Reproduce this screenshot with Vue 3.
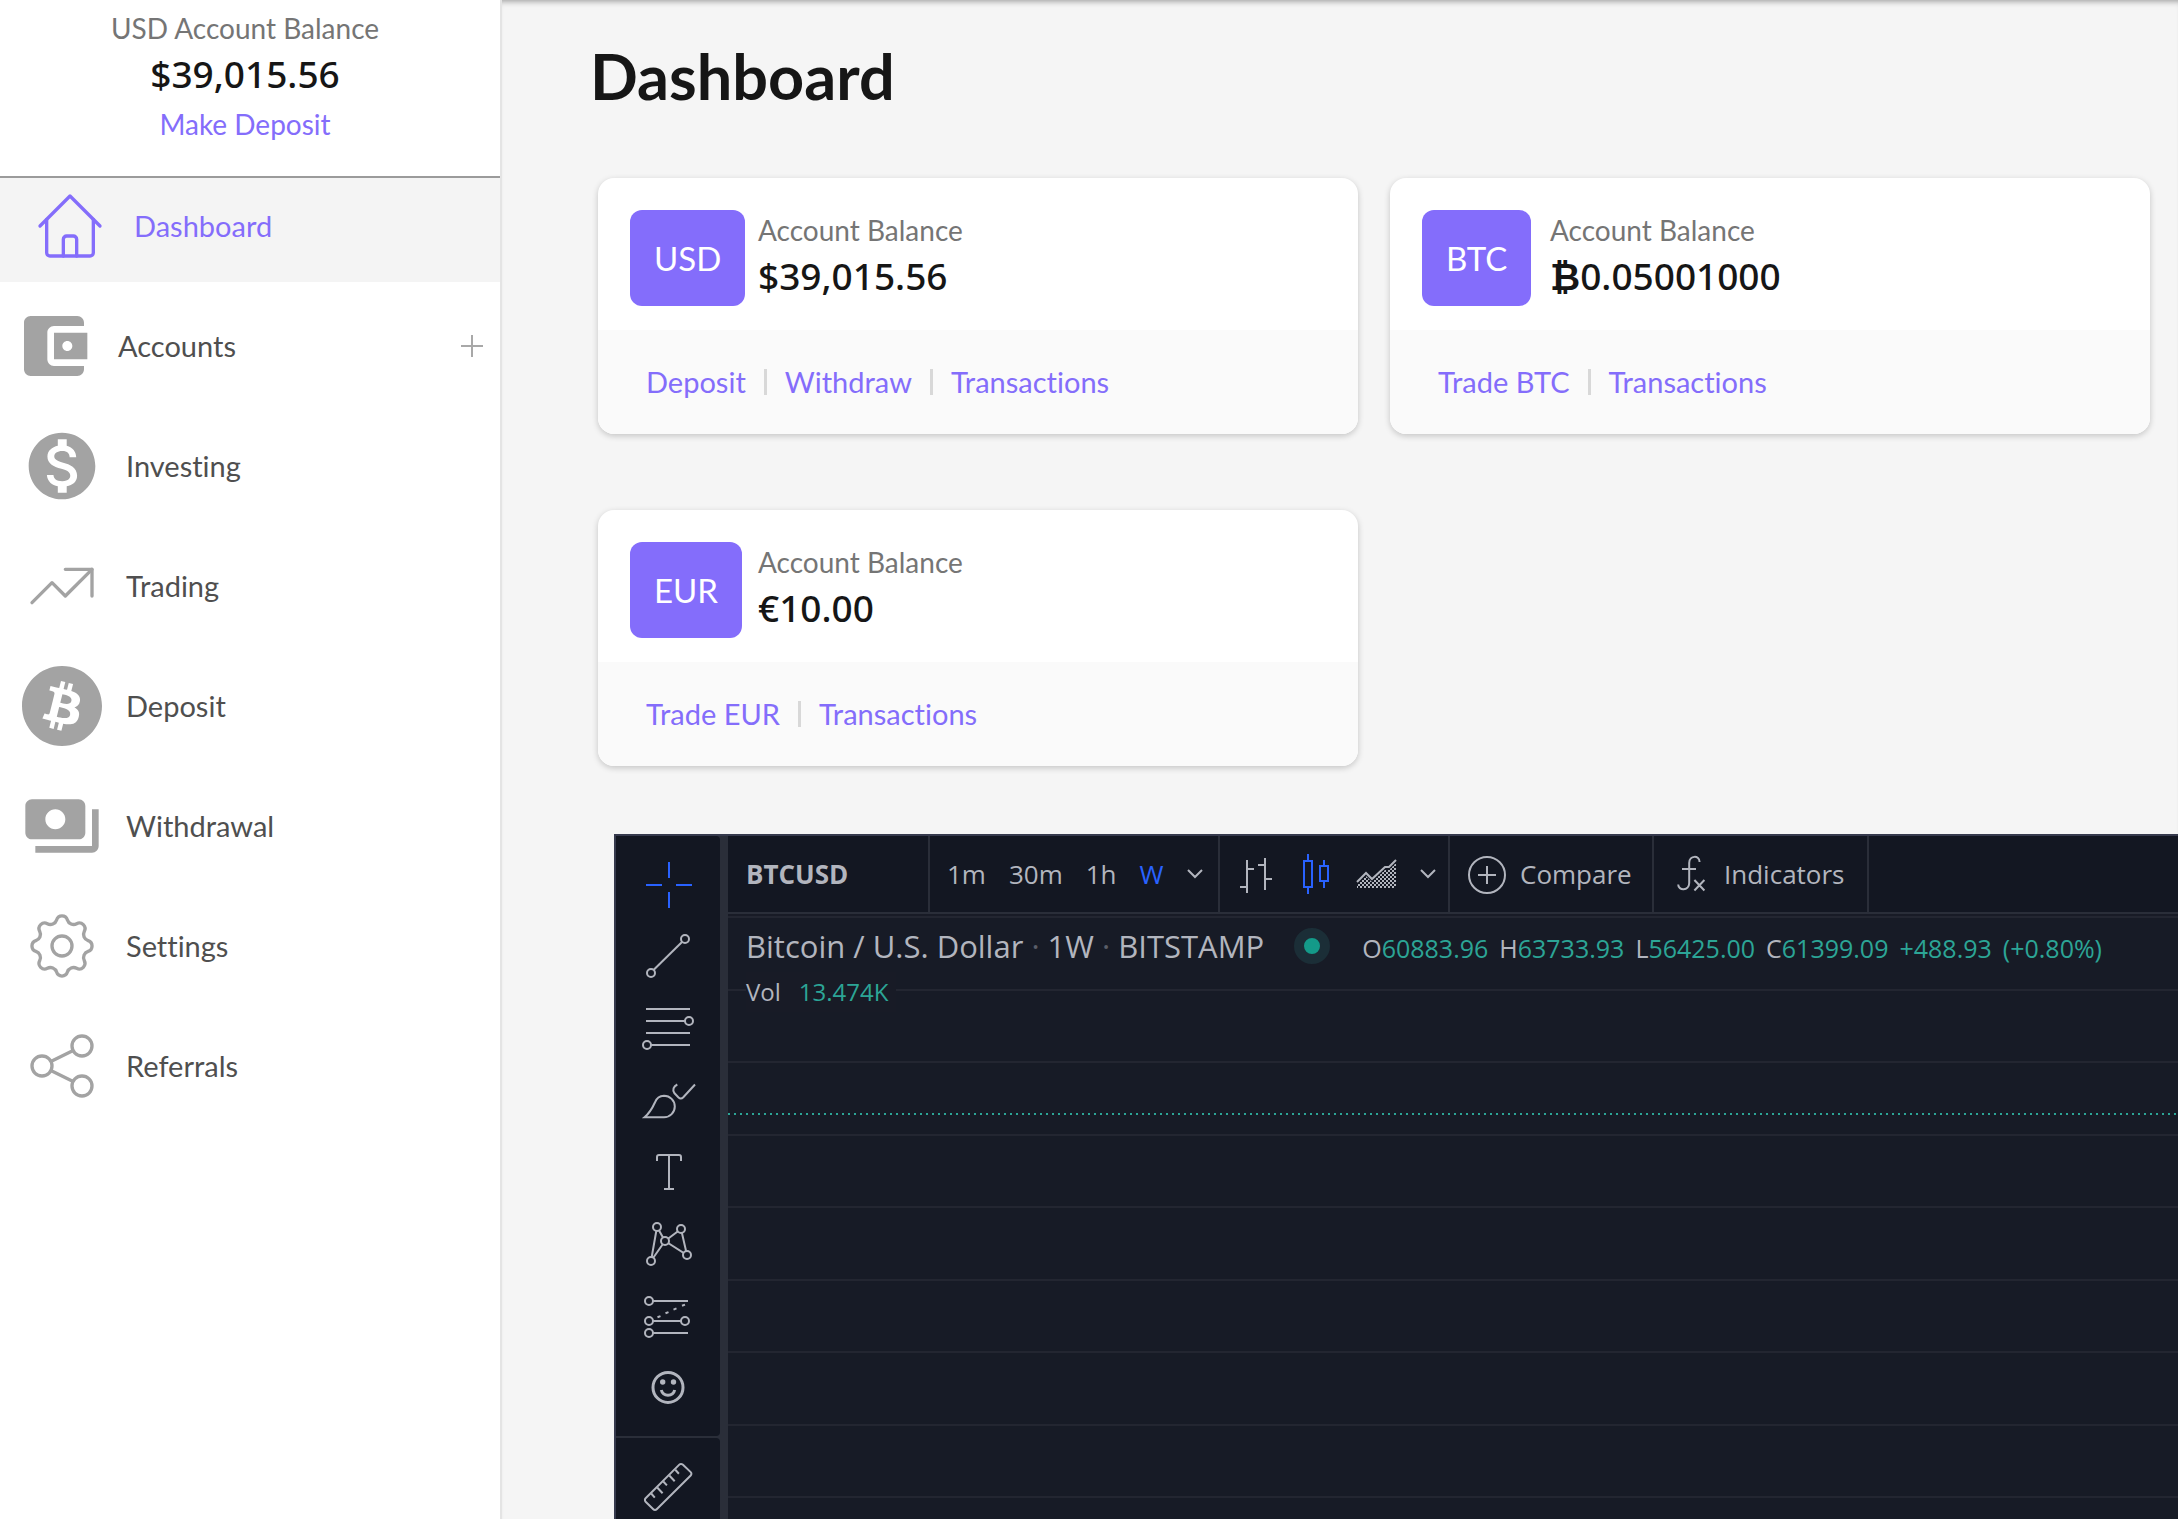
<script setup>
const navItems = [
  { label: 'Dashboard', icon: 'home', active: true },
  { label: 'Accounts', icon: 'wallet', expandable: true },
  { label: 'Investing', icon: 'dollar' },
  { label: 'Trading', icon: 'trend' },
  { label: 'Deposit', icon: 'bitcoin' },
  { label: 'Withdrawal', icon: 'cash' },
  { label: 'Settings', icon: 'gear' },
  { label: 'Referrals', icon: 'share' },
]

const accounts = [
  { code: 'USD', balance: '$39,015.56', links: ['Deposit', 'Withdraw', 'Transactions'] },
  { code: 'BTC', coin: '₿', balance: '0.05001000', links: ['Trade BTC', 'Transactions'] },
  { code: 'EUR', balance: '€10.00', links: ['Trade EUR', 'Transactions'] },
]

const intervals = ['1m', '30m', '1h', 'W']
const activeInterval = 'W'

const ohlc = [
  { key: 'O', value: '60883.96' },
  { key: 'H', value: '63733.93' },
  { key: 'L', value: '56425.00' },
  { key: 'C', value: '61399.09' },
]

// Outline of the settings gear: eight lobes joined by concave arcs.
const point = (deg) => {
  const a = (deg * Math.PI) / 180
  return `${(12 + 8 * Math.cos(a)).toFixed(2)} ${(12 + 8 * Math.sin(a)).toFixed(2)}`
}
let gearPath = `M${point(-11.7)}`
for (let k = 0; k < 8; k++) {
  gearPath += `A1.7 1.7 0 0 1 ${point(45 * k + 11.7)}A1.95 1.95 0 0 0 ${point(45 * (k + 1) - 11.7)}`
}
gearPath += 'Z'
</script>

<template>
  <div class="page">
    <aside class="sidebar">
      <section class="summary">
        <p class="label">USD Account Balance</p>
        <p class="amount">$39,015.56</p>
        <a class="link" href="#">Make Deposit</a>
      </section>
      <nav class="nav" aria-label="Main">
        <a
          v-for="item in navItems"
          :key="item.label"
          href="#"
          class="nav-item"
          :class="{ 'is-active': item.active, 'is-expandable': item.expandable }"
        >
          <svg v-if="item.icon === 'bitcoin'" class="nav-icon solid" viewBox="0 0 32 32" aria-hidden="true">
            <path d="M16 32C7.163 32 0 24.837 0 16S7.163 0 16 0s16 7.163 16 16-7.163 16-16 16zm7.189-17.98c.314-2.096-1.283-3.223-3.465-3.975l.708-2.84-1.728-.43-.69 2.765c-.454-.114-.92-.22-1.385-.326l.695-2.783L15.596 6l-.708 2.839c-.376-.086-.746-.17-1.104-.26l.002-.009-2.384-.595-.46 1.846s1.283.294 1.256.312c.7.175.826.638.805 1.006l-.806 3.235c.048.012.11.03.18.057l-.183-.045-1.13 4.532c-.086.212-.303.531-.793.41.018.025-1.256-.313-1.256-.313l-.858 1.978 2.25.561c.418.105.828.215 1.231.318l-.715 2.872 1.727.43.708-2.84c.472.127.93.245 1.378.357l-.706 2.828 1.728.43.715-2.866c2.948.558 5.164.333 6.097-2.333.752-2.146-.037-3.385-1.588-4.192 1.13-.26 1.98-1.003 2.207-2.538zm-3.95 5.538c-.533 2.147-4.148.986-5.32.695l.95-3.805c1.172.293 4.929.872 4.37 3.11zm.535-5.569c-.487 1.953-3.495.96-4.47.717l.86-3.45c.975.243 4.118.696 3.61 2.733z" />
          </svg>
          <svg v-else-if="item.icon === 'wallet'" class="nav-icon solid" viewBox="0 0 24 24" aria-hidden="true">
            <path d="M21 18v1c0 1.1-.9 2-2 2H5c-1.11 0-2-.9-2-2V5c0-1.1.89-2 2-2h14c1.1 0 2 .9 2 2v1h-9c-1.11 0-2 .9-2 2v8c0 1.1.89 2 2 2h9zm-9-2h10V8H12v8zm4-2.5c-.83 0-1.5-.67-1.5-1.5s.67-1.5 1.5-1.5 1.5.67 1.5 1.5-.67 1.5-1.5 1.5z" />
          </svg>
          <svg v-else-if="item.icon === 'dollar'" class="nav-icon solid" viewBox="0 0 24 24" aria-hidden="true">
            <path d="M12 2C6.48 2 2 6.48 2 12s4.48 10 10 10 10-4.48 10-10S17.52 2 12 2zm1.41 16.09V20h-2.67v-1.93c-1.71-.36-3.16-1.46-3.27-3.4h1.96c.1 1.05.82 1.87 2.65 1.87 1.96 0 2.4-.98 2.4-1.59 0-.83-.44-1.61-2.67-2.14-2.48-.6-4.18-1.62-4.18-3.67 0-1.72 1.39-2.84 3.11-3.21V4h2.67v1.95c1.86.45 2.79 1.86 2.85 3.39H14.3c-.05-1.11-.64-1.87-2.22-1.87-1.5 0-2.4.68-2.4 1.64 0 .84.65 1.39 2.67 1.91s4.18 1.39 4.18 3.91c-.02 1.83-1.38 2.83-3.12 3.16z" />
          </svg>
          <svg v-else-if="item.icon === 'cash'" class="nav-icon solid" viewBox="0 0 24 24" aria-hidden="true">
            <path d="M19 14V6c0-1.1-.9-2-2-2H3c-1.1 0-2 .9-2 2v8c0 1.1.9 2 2 2h14c1.1 0 2-.9 2-2zm-9-1c-1.66 0-3-1.34-3-3s1.34-3 3-3 3 1.34 3 3-1.34 3-3 3zm13-6v11c0 1.1-.9 2-2 2H4v-2h17V7h2z" />
          </svg>
          <svg v-else class="nav-icon line" viewBox="0 0 24 24" aria-hidden="true">
            <template v-if="item.icon === 'home'">
              <path d="M3 12l9-9 9 9" />
              <path d="M5 10v10a1 1 0 0 0 1 1h12a1 1 0 0 0 1-1V10" />
              <path d="M10 21v-5a1 1 0 0 1 1-1h2a1 1 0 0 1 1 1v5" />
            </template>
            <template v-else-if="item.icon === 'trend'">
              <path d="M3 17l6-6 4 4 8-8" />
              <path d="M13 7h8v8" />
            </template>
            <template v-else-if="item.icon === 'gear'">
              <path :d="gearPath" />
              <circle cx="12" cy="12" r="3" />
            </template>
            <template v-else>
              <circle cx="6" cy="12" r="3" />
              <circle cx="18" cy="6" r="3" />
              <circle cx="18" cy="18" r="3" />
              <path d="M8.8 10.6l6.4-3.2M8.8 13.4l6.4 3.2" />
            </template>
          </svg>
          <span class="nav-label">{{ item.label }}</span>
          <svg v-if="item.expandable" class="plus" viewBox="0 0 22 22" aria-hidden="true">
            <path d="M11 0v22M0 11h22" />
          </svg>
        </a>
      </nav>
    </aside>

    <main class="main">
      <h1 class="title">Dashboard</h1>

      <section class="cards">
        <article v-for="account in accounts" :key="account.code" class="card">
          <div class="card-top">
            <div><span class="badge">{{ account.code }}</span></div>
            <div>
              <p class="label">Account Balance</p>
              <p class="amount"><b v-if="account.coin">{{ account.coin }}</b>{{ account.balance }}</p>
            </div>
          </div>
          <footer class="card-links">
            <a v-for="link in account.links" :key="link" class="link" href="#">{{ link }}</a>
          </footer>
        </article>
      </section>

      <section class="chart">
        <div class="tools">
          <div class="tool-group">
            <button class="tool" aria-label="Crosshair">
              <svg class="blue" viewBox="0 0 56 56"><path d="M29 5v16M29 35v16M6 28h16M36 28h16" /></svg>
            </button>
            <button class="tool" aria-label="Trend line">
              <svg viewBox="0 0 56 56"><path d="M13.5 41L42 13" /><circle cx="11" cy="44" r="4" /><circle cx="45" cy="10" r="4" /></svg>
            </button>
            <button class="tool" aria-label="Fibonacci retracement">
              <svg viewBox="0 0 56 56"><path d="M6 8h44M6 20h39M6 32h44M11 44h39" /><circle cx="49" cy="20" r="4" /><circle cx="7" cy="44" r="4" /></svg>
            </button>
            <button class="tool" aria-label="Brush">
              <svg viewBox="0 0 56 56"><path d="M4.500 44.300c6-5 8-9.500 10.500-15a10 10 0 0 1 9-6.600a10.800 10.800 0 0 1 0 21.600z" /><path d="M37.300 11.500c-4 2-5 5.500-3 8.500l4 4.200c1.500 1.500 3.500 1.500 5 0L55 11.500" /></svg>
            </button>
            <button class="tool" aria-label="Text">
              <svg viewBox="0 0 56 56"><path d="M17 16v-4a2 2 0 0 1 2-2h20a2 2 0 0 1 2 2v4M29 10v34M24 44h10" /></svg>
            </button>
            <button class="tool" aria-label="Pattern">
              <svg viewBox="0 0 56 56">
                <path d="M17 10l-6 34L25 24zM25 24L41 12l6 26z" />
                <circle cx="17" cy="10" r="4" /><circle cx="41" cy="12" r="4" /><circle cx="25" cy="24" r="4" /><circle cx="11" cy="44" r="4" /><circle cx="47" cy="38" r="4" />
              </svg>
            </button>
            <button class="tool" aria-label="Forecast">
              <svg viewBox="0 0 56 56">
                <path d="M13 12h35M13 32h28M13 44h35" />
                <path d="M17.500 28.300l3-1.200M25.500 24.300l3-1.200M33.500 20.600l3-1.200M42 16.800l3-1.200" />
                <circle cx="9" cy="12" r="4" /><circle cx="9" cy="32" r="4" /><circle cx="45" cy="32" r="4" /><circle cx="9" cy="44" r="4" />
              </svg>
            </button>
            <button class="tool" aria-label="Emoji">
              <svg viewBox="0 0 56 56">
                <circle class="thick" cx="28" cy="26.400" r="15" /><path class="thick" d="M21.300 29a6.900 6.900 0 0 0 13.400 0" />
                <circle class="dot" cx="22.700" cy="21" r="2.700" /><circle class="dot" cx="33.500" cy="21" r="2.700" />
              </svg>
            </button>
          </div>
          <div class="tool-group">
            <button class="tool" aria-label="Measure">
              <svg viewBox="0 0 56 56">
                <path d="M5.600 39.300L39.300 5.600a2.400 2.400 0 0 1 3.400 0l8 7.500a2.400 2.400 0 0 1 0 3.400L16.700 50.300a2.400 2.400 0 0 1-3.400 0L5.600 42.700a2.400 2.400 0 0 1 0-3.400z" />
                <path d="M35.300 10.800l3.600 3.900M29.300 16.500l5.400 5.800M23.300 22.500l3.600 3.900M17.200 28.500l5.400 5.800M11.200 34.500l3.600 4.200" />
              </svg>
            </button>
          </div>
        </div>

        <div class="pane">
          <div class="bar">
            <div class="cell cell-symbol"><button class="symbol">BTCUSD</button></div>
            <div class="cell cell-intervals">
              <button v-for="interval in intervals" :key="interval" :class="{ selected: interval === activeInterval }">{{ interval }}</button>
              <button aria-label="More intervals"><svg class="chevron" viewBox="0 0 16 10"><path d="M1 1l7 7 7-7" /></svg></button>
            </div>
            <div class="cell cell-styles">
              <button aria-label="Bars">
                <svg class="style-icon" viewBox="0 0 56 56"><path d="M19 14v33M19 23h7M12 41h7M37 12v32M30 19h7M37 33h7" /></svg>
              </button>
              <button aria-label="Candles">
                <svg class="style-icon blue" viewBox="0 0 56 56"><path d="M16 15h8v26h-8zM20 8v7M20 41v7M32 20h8v15h-8zM36 14v6M36 35v7" /></svg>
              </button>
              <button aria-label="Area">
                <svg class="style-icon" viewBox="0 0 56 56">
                  <defs>
                    <pattern id="checker" width="4" height="4" patternUnits="userSpaceOnUse">
                      <rect width="2" height="2" fill="#b2b5be" stroke="none" /><rect x="2" y="2" width="2" height="2" fill="#b2b5be" stroke="none" />
                    </pattern>
                  </defs>
                  <path class="area-fill" d="M9 42V39L18 30l6 6L37 24h4l7-7v25z" fill="url(#checker)" />
                  <path d="M9 36l9-9 6 6 13-12h4l7-7" />
                </svg>
              </button>
              <button aria-label="More styles"><svg class="chevron" viewBox="0 0 16 10"><path d="M1 1l7 7 7-7" /></svg></button>
            </div>
            <div class="cell cell-compare">
              <button>
                <svg class="action-icon" viewBox="0 0 40 40"><circle cx="20" cy="21" r="18" /><path d="M20 12v18M11 21h18" /></svg>
                Compare
              </button>
            </div>
            <div class="cell cell-indicators">
              <button>
                <svg class="action-icon" viewBox="0 0 40 40"><path d="M28.600 8C28.600 1 18.200 1 18.200 9v20c0 8-11 8-11 1.500M11 15h14M23.400 26l10 10.500M33.400 26l-10 10.500" /></svg>
                Indicators
              </button>
            </div>
          </div>

          <div class="plot">
            <div class="grid" aria-hidden="true"><i v-for="n in 9" :key="n"></i></div>
            <div class="price-line" aria-hidden="true"></div>
            <div class="legend">
              <div class="legend-row">
                <h2 class="legend-title">Bitcoin / U.S. Dollar <b>·</b> 1W <b>·</b> BITSTAMP</h2>
                <span class="status"></span>
                <p class="ohlc">
                  <span v-for="entry in ohlc" :key="entry.key">{{ entry.key }}<em>{{ entry.value }}</em></span>
                  <em>+488.93</em>
                  <em>(+0.80%)</em>
                </p>
              </div>
              <p class="volume">Vol <em>13.474K</em></p>
            </div>
          </div>
        </div>
      </section>
    </main>
  </div>
</template>

<style>
body {
  margin: 0;
}
</style>

<style scoped>
* {
  box-sizing: border-box;
}

p,
h1,
h2 {
  margin: 0;
}

a {
  text-decoration: none;
}

em {
  font-style: normal;
}

svg {
  display: block;
  flex: none;
}

button {
  padding: 0;
  border: 0;
  background: none;
  color: inherit;
  font: inherit;
}

.page {
  display: flex;
  height: 100vh;
  overflow: hidden;
  background: #f5f5f5;
  font: 28px/40px Lato, "Noto Sans", sans-serif;
  font-variant-ligatures: none;
}

.sidebar {
  flex: none;
  width: 502px;
  border-right: 2px solid #e4e4e4;
  background: #fff;
}

.summary {
  display: flex;
  flex-direction: column;
  align-items: center;
  height: 178px;
  padding: 8px 10px 0 0;
  border-bottom: 2px solid #9b9b9b;
}

.summary .link {
  margin-top: 4px;
}

.label {
  color: #757575;
}

.amount {
  color: #161616;
  font: 500 37px/52px "Noto Sans", sans-serif;
}

.amount b {
  font-family: "DejaVu Sans", sans-serif;
  font-weight: 700;
  line-height: 40px;
}

.link {
  color: #846dfb;
}

.nav-item {
  display: flex;
  align-items: center;
  gap: 24px;
  height: 120px;
  padding: 0 17px 0 22px;
  color: #4f4f4f;
  font-size: 29px;
}

.nav-item.is-active {
  height: 104px;
  margin-bottom: 4px;
  padding: 0 17px 8px 30px;
  background: #f4f4f4;
  color: #846dfb;
}

.nav-item.is-expandable {
  padding-left: 14px;
}

.nav-icon {
  width: 80px;
  height: 80px;
}

.solid {
  fill: #a3a3a3;
}

.line {
  fill: none;
  stroke: #a3a3a3;
  stroke-linecap: round;
  stroke-linejoin: round;
}

.is-active .line {
  stroke: #846dfb;
}

.nav-label {
  flex: 1;
}

.plus {
  width: 22px;
  height: 22px;
  fill: none;
  stroke: #a8a8a8;
  stroke-width: 2;
}

.main {
  display: flex;
  flex: 1;
  flex-direction: column;
  min-width: 0;
  padding-top: 40px;
  box-shadow: inset 0 6px 6px -5px rgba(0, 0, 0, 0.4);
}

.title {
  margin: 0 0 66px 88px;
  color: #161616;
  font-size: 63px;
  font-weight: 700;
  line-height: 72px;
}

.cards {
  display: grid;
  grid-template-columns: repeat(2, minmax(0, 1fr));
  gap: 76px 32px;
  padding: 0 28px 0 96px;
}

.card {
  overflow: hidden;
  border-radius: 16px;
  background: #fff;
  box-shadow: 0 2px 6px rgba(0, 0, 0, 0.2);
}

.card-top {
  display: grid;
  grid-template-columns: 128px 1fr;
  height: 152px;
  padding: 32px;
}

.badge {
  display: inline-block;
  padding: 0 24px;
  border-radius: 12px;
  background: #846dfb;
  color: #fff;
  font-size: 33px;
  line-height: 96px;
}

.card-links {
  display: flex;
  align-items: center;
  gap: 18px;
  height: 104px;
  padding: 0 48px;
  background: #fafafa;
  font-size: 29px;
}

.card-links .link {
  display: flex;
  align-items: center;
  gap: 18px;
}

.card-links .link + .link::before {
  width: 3px;
  height: 26px;
  background: #d8d8d8;
  content: "";
}

.chart {
  display: flex;
  flex: 1;
  min-height: 0;
  margin: 68px 0 0 112px;
  overflow: hidden;
  border: solid #363a4d;
  border-width: 2px 0 0 2px;
  background: #2a2e39;
  color: #b2b5be;
  font: 26px/40px "Open Sans", "Noto Sans", sans-serif;
}

.chart svg {
  fill: none;
  stroke: #b2b5be;
  stroke-width: 2;
}

.chart svg.blue {
  stroke: #2962ff;
}

.area-fill {
  stroke: none;
}

.tools {
  display: flex;
  flex: none;
  flex-direction: column;
  gap: 2px;
  width: 104px;
  margin-right: 8px;
}

.tool-group {
  display: flex;
  flex-direction: column;
  align-items: center;
  padding: 13px 0 11px;
  border-radius: 0 4px 4px 0;
  background: #131722;
}

.tool {
  display: grid;
  flex: none;
  place-items: center;
  width: 72px;
  height: 72px;
}

.tool svg {
  width: 56px;
  height: 56px;
}

.tool circle {
  fill: #131722;
}

.tool .thick {
  fill: none;
  stroke-width: 3;
}

.tool .dot {
  fill: #b2b5be;
  stroke: none;
}

.pane {
  display: flex;
  flex: 1;
  flex-direction: column;
  min-width: 0;
  background: #181b26;
}

.bar {
  display: flex;
  height: 78px;
  margin-bottom: 2px;
  border-bottom: 2px solid #2a2e39;
  background: #131722;
}

.cell {
  display: flex;
  flex: none;
  align-items: center;
  border-right: 2px solid #2a2e39;
}

.cell button {
  display: flex;
  align-items: center;
  gap: 13px;
}

.cell-symbol {
  width: 202px;
  padding-left: 18px;
}

.symbol {
  font-weight: 700;
}

.cell-intervals {
  gap: 23px;
  width: 290px;
  padding-left: 17px;
}

.cell .selected {
  color: #2962ff;
}

.cell-styles {
  gap: 4px;
  width: 230px;
  padding-left: 8px;
}

.cell-styles button:last-child {
  margin-left: 12px;
}

.cell-compare {
  width: 204px;
  padding-left: 17px;
}

.cell-indicators {
  width: 215px;
  padding-left: 17px;
}

.chevron {
  width: 16px;
  height: 10px;
}

.style-icon {
  width: 56px;
  height: 56px;
}

.action-icon {
  width: 40px;
  height: 40px;
}

.plot {
  position: relative;
  flex: 1;
  overflow: hidden;
  background: #171b26;
}

.grid i {
  display: block;
  height: 72px;
  border-top: 2px solid #232631;
}

.grid i:nth-child(odd) {
  height: 73px;
}

.price-line {
  position: absolute;
  top: 197px;
  right: 0;
  left: 0;
  height: 2px;
  background: repeating-linear-gradient(90deg, #2ca596 0 2px, transparent 2px 6px);
}

.legend {
  position: absolute;
  top: 8px;
  left: 18px;
}

.legend-row {
  display: flex;
  align-items: center;
}

.legend-title {
  font-size: 31px;
  font-weight: 400;
  white-space: nowrap;
}

.legend-title b {
  color: #5a5e69;
  font-weight: 400;
}

.status {
  width: 36px;
  height: 36px;
  margin: 0 32px 0 30px;
  border: 10px solid #1b2e37;
  border-radius: 50%;
  background: #149a89;
}

.ohlc {
  display: flex;
  gap: 11px;
  padding-top: 4px;
  font-size: 25px;
  white-space: nowrap;
}

.ohlc em,
.volume em {
  color: #2ca596;
}

.volume {
  display: flex;
  gap: 18px;
  width: fit-content;
  margin-top: 4px;
  padding-right: 8px;
  background: #181b26;
  font-size: 24px;
}
</style>
